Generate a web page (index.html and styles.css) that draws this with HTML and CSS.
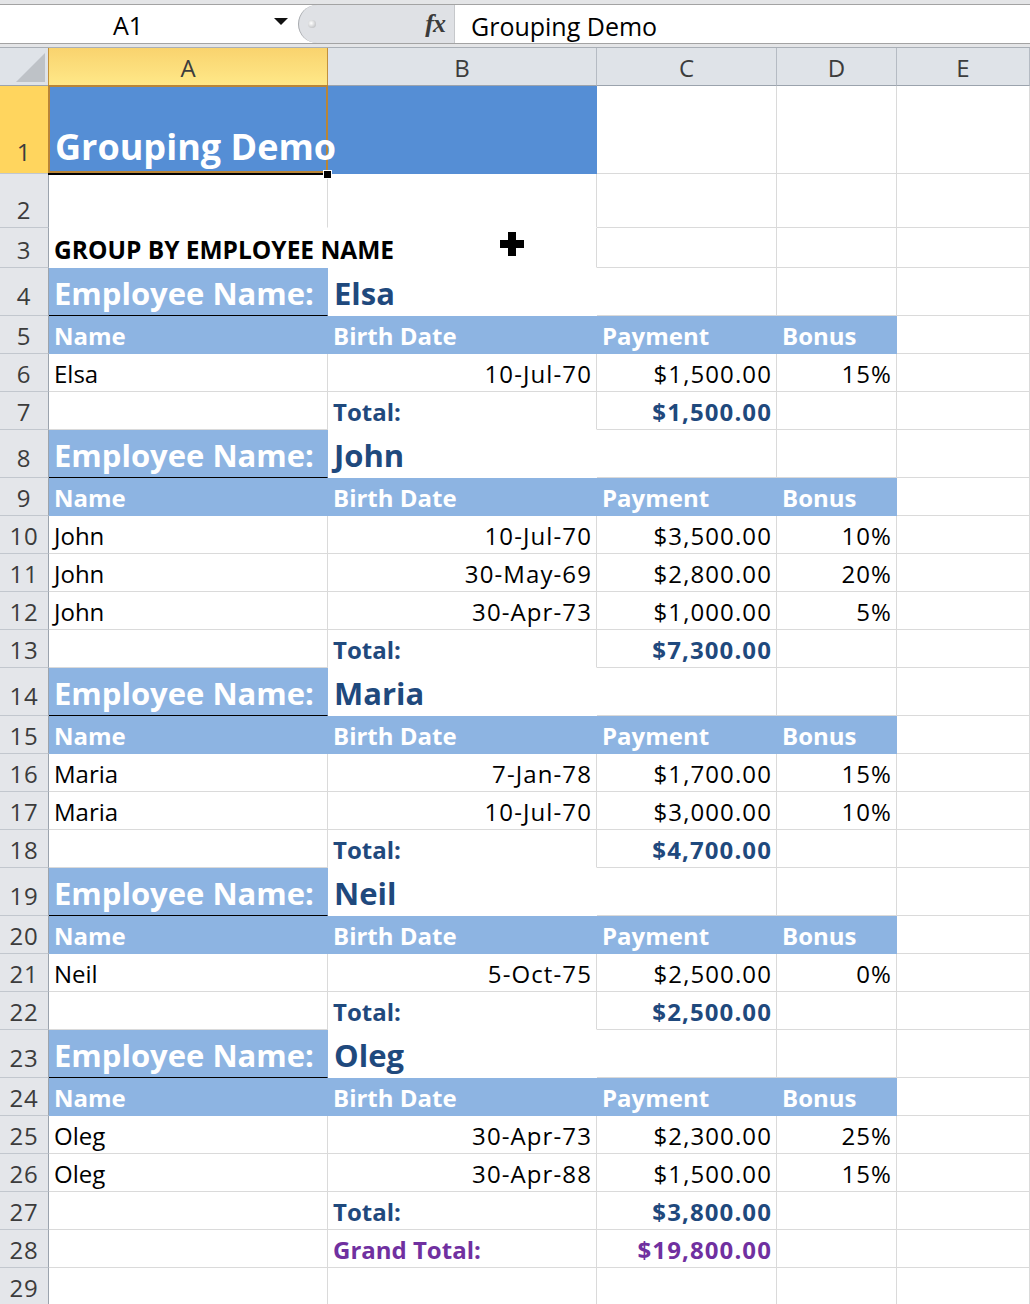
FILE: index.html
```html
<!DOCTYPE html>
<html>
<head>
  <title>Grouping Demo</title>
  <link rel="stylesheet" href="styles.css">
</head>
<body>

  <div class="fbar-wrap">
    <div class="fbar">
      <div class="name-box">A1<span class="caret"></span></div>
      <div class="fx-panel"><span class="grip"></span><span class="fx">fx</span></div>
      <div class="formula">Grouping Demo</div>
    </div>
  </div>

  <div class="sheet" id="sheet">
    <div class="row colhead">
      <div class="cell corner"><span class="tri"></span></div>
      <div class="cell ch sel">A</div>
      <div class="cell ch">B</div>
      <div class="cell ch">C</div>
      <div class="cell ch">D</div>
      <div class="cell ch">E</div>
    </div>
  </div>

  <script>
const groups = [
  { name: 'Elsa', total: '$1,500.00', rows: [
    ['Elsa', '10-Jul-70', '$1,500.00', '15%']
  ]},
  { name: 'John', total: '$7,300.00', rows: [
    ['John', '10-Jul-70', '$3,500.00', '10%'],
    ['John', '30-May-69', '$2,800.00', '20%'],
    ['John', '30-Apr-73', '$1,000.00', '5%']
  ]},
  { name: 'Maria', total: '$4,700.00', rows: [
    ['Maria', '7-Jan-78', '$1,700.00', '15%'],
    ['Maria', '10-Jul-70', '$3,000.00', '10%']
  ]},
  { name: 'Neil', total: '$2,500.00', rows: [
    ['Neil', '5-Oct-75', '$2,500.00', '0%']
  ]},
  { name: 'Oleg', total: '$3,800.00', rows: [
    ['Oleg', '30-Apr-73', '$2,300.00', '25%'],
    ['Oleg', '30-Apr-88', '$1,500.00', '15%']
  ]}
];

const sheet = document.getElementById('sheet');
let rowNum = 0;

function addRow(size, cells) {
  rowNum++;
  const row = document.createElement('div');
  row.className = 'row' + (size ? ' ' + size : '');

  const rh = document.createElement('div');
  rh.className = 'cell rh' + (rowNum === 1 ? ' sel' : '');
  rh.textContent = rowNum;
  row.appendChild(rh);

  // always 5 columns, A..E
  for (let i = 0; i < 5; i++) {
    const c = cells[i] || {};
    const el = document.createElement('div');
    el.className = 'cell ' + (c.cls || '');
    if (c.html) el.innerHTML = c.html;
    else el.textContent = c.text || '';
    row.appendChild(el);
  }
  sheet.appendChild(row);
}

addRow('title', [
  { cls: 'fill-title a1', html: '<span class="sel-box"></span><span class="sel-edge"></span><span class="handle"></span><span class="title-text">Grouping Demo</span>' },
  { cls: 'fill-title' }
]);
addRow('gap', [{ cls: 'nb' }, { cls: 'nb' }]);
addRow('sub', [
  { cls: 'nr nb caption', text: 'GROUP BY EMPLOYEE NAME' },
  { cls: 'nb has-cursor', html: '<span class="cursor"></span>' }
]);

groups.forEach((g, gi) => {
  const last = gi === groups.length - 1;
  addRow('tall', [
    { cls: 'label', text: 'Employee Name:' },
    { cls: 'emp', text: g.name }
  ]);
  addRow('', [
    { cls: 'head', text: 'Name' },
    { cls: 'head', text: 'Birth Date' },
    { cls: 'head', text: 'Payment' },
    { cls: 'head', text: 'Bonus' }
  ]);
  g.rows.forEach(r => {
    addRow('', [
      { text: r[0] },
      { cls: 'num', text: r[1] },
      { cls: 'num', text: r[2] },
      { cls: 'num', text: r[3] }
    ]);
  });
  addRow('', [
    {},
    { cls: 'tot' + (last ? '' : ' nb'), text: 'Total:' },
    { cls: 'tot num', text: g.total }
  ]);
});

addRow('', [
  {},
  { cls: 'grand', text: 'Grand Total:' },
  { cls: 'grand num', text: '$19,800.00' }
]);
addRow('', []);
  </script>
</body>
</html>
```

FILE: styles.css
```css
body {
  margin: 0;
  font-family: "Open Sans", Lato, sans-serif;
  background: #fff;
}

/* formula bar */
.fbar-wrap {
  height: 47px;
  box-sizing: border-box;
  padding: 4px 0 3px;
  background: #e4e5e7;
}

.fbar {
  height: 40px;
  box-sizing: border-box;
  border-top: 1px solid #a3a3a3;
  border-bottom: 1px solid #a3a3a3;
  background: #fff;
  display: flex;
}

.name-box {
  width: 298px;
  box-sizing: border-box;
  display: flex;
  align-items: flex-end;
  padding: 0 0 5px 113px;
  font-size: 25px;
  line-height: 1;
}

.caret {
  margin-left: auto;
  margin-right: 10px;
  align-self: center;
  width: 0;
  height: 0;
  border-top: 7px solid #111;
  border-left: 7px solid transparent;
  border-right: 7px solid transparent;
}

.fx-panel {
  width: 157px;
  box-sizing: border-box;
  display: flex;
  align-items: center;
  background: #dfe1e5;
  border-left: 1px solid #a6a9ad;
  border-right: 1px solid #c6c8cb;
  border-radius: 19px 0 0 19px;
}

.grip {
  width: 8px;
  height: 8px;
  margin-left: 9px;
  border-radius: 50%;
  background: radial-gradient(circle at 40% 40%, #fff, #aeb0b3);
}

.fx {
  margin-left: auto;
  margin-right: 9px;
  font: italic bold 26px "Liberation Serif", serif;
  color: #3b3b3b;
  letter-spacing: -1px;
}

.formula {
  flex: 1;
  display: flex;
  align-items: flex-end;
  padding: 0 0 4px 16px;
  font-size: 25px;
  line-height: 1;
}

/* grid */
.row {
  display: grid;
  grid-template-columns: 49px 279px 269px 180px 120px 133px;
  height: 38px;
}

.row.colhead {
  height: 39px;
  box-sizing: border-box;
  border-top: 1px solid #a9afb6;
}

.row.title { height: 88px; }
.row.gap   { height: 54px; }
.row.sub   { height: 40px; }
.row.tall  { height: 48px; }

.cell {
  box-sizing: border-box;
  min-width: 0;
  display: flex;
  align-items: flex-end;
  padding: 0 5px 5px;
  border-right: 1px solid #dadada;
  border-bottom: 1px solid #dadada;
  font-size: 24px;
  line-height: 1;
  white-space: nowrap;
  color: #000;
}

.nr { border-right-color: transparent; }
.nb { border-bottom-color: transparent; }

.num {
  justify-content: flex-end;
  padding-right: 4px;
  letter-spacing: 1.1px;
}

.caption {
  font-weight: bold;
  font-size: 24.5px;
}

/* headers */
.corner {
  position: relative;
  background: #dfe3e8;
  border-right-color: #c1903c;
  border-bottom-color: #9ba3ad;
}

.tri {
  position: absolute;
  right: 3px;
  bottom: 3px;
  width: 0;
  height: 0;
  border-left: 29px solid transparent;
  border-bottom: 29px solid #bec2c7;
}

.ch {
  justify-content: center;
  background: #dfe3e8;
  color: #3c3c3c;
  border-right-color: #b5bbc3;
  border-bottom-color: #9ba3ad;
}

.ch.sel {
  background: linear-gradient(#f9d36e, #ffe888);
  border-right-color: #c1903c;
  border-bottom-color: #c1903c;
}

.rh {
  justify-content: center;
  padding-left: 0;
  padding-right: 0;
  background: #e4e6ea;
  color: #3c3c3c;
  letter-spacing: 0.8px;
  border-right-color: #9ba3ad;
  border-bottom-color: #c2c7ce;
}

.title .rh { padding-bottom: 9px; }
.tall .rh  { padding-bottom: 7px; }

.rh.sel {
  background: #ffd55e;
  border-right-color: #c1903c;
}

/* title + selection */
.fill-title {
  background: #558ed5;
  border-color: transparent;
}

.a1 {
  position: relative;
  z-index: 1;
  padding-bottom: 8px;
  padding-left: 6px;
}

.title-text {
  position: relative;
  font-size: 36px;
  font-weight: bold;
  color: #fff;
}

.sel-box {
  position: absolute;
  left: -1px;
  top: -1px;
  width: 280px;
  height: 88px;
  box-sizing: border-box;
  border: 2px solid #b98537;
}

.sel-edge {
  position: absolute;
  left: -1px;
  top: 87px;
  width: 280px;
  height: 2px;
  background: #000;
}

.handle {
  position: absolute;
  left: 274px;
  top: 84px;
  width: 7px;
  height: 7px;
  background: #000;
  border: 1px solid #fff;
}

/* report */
.label {
  background: #8db4e2;
  color: #fff;
  font-weight: bold;
  font-size: 31px;
  padding-bottom: 6px;
  border-right-color: transparent;
  border-bottom-color: #000;
}

.emp {
  color: #1f497d;
  font-weight: bold;
  font-size: 31px;
  padding-left: 6px;
  padding-bottom: 6px;
  border-color: transparent;
}

.head {
  background: #8db4e2;
  color: #fff;
  font-weight: bold;
  font-size: 24px;
  border-color: transparent;
}

.tot   { color: #1f497d; font-weight: bold; }
.grand { color: #7030a0; font-weight: bold; }

/* mouse cursor */
.has-cursor { position: relative; }

.cursor {
  position: absolute;
  left: 172px;
  top: 4px;
  width: 24px;
  height: 24px;
}

.cursor::before,
.cursor::after {
  content: "";
  position: absolute;
  background: #000;
}

.cursor::before { left: 8px; top: 0; width: 8px; height: 24px; }
.cursor::after  { left: 0; top: 8px; width: 24px; height: 8px; }
```
